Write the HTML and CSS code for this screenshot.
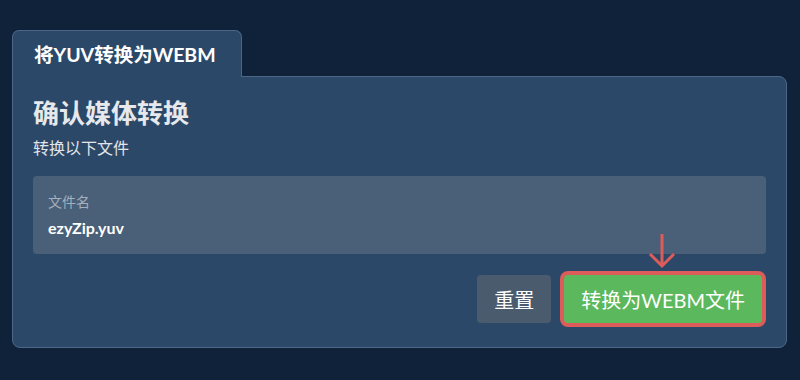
FILE: index.html
```html
<!DOCTYPE html>
<html lang="zh">
<head>
    <meta charset="UTF-8">
    <title>将YUV转换为WEBM</title>
    <link rel="stylesheet" href="styles.css">
</head>
<body>
    <div class="page">
        <div class="tab">将YUV转换为WEBM</div>
        <div class="card">
            <h1>确认媒体转换</h1>
            <p class="sub">转换以下文件</p>
            <div class="file-box">
                <div class="file-label">文件名</div>
                <div class="file-name">ezyZip.yuv</div>
            </div>
            <div class="actions">
                <button class="btn btn-reset">重置</button>
                <div class="convert-wrap">
                    <svg class="arrow" width="30" height="38" viewBox="0 0 30 38">
                        <path d="M15 2 V34 M3 22 L15 34 L27 22" fill="none" stroke="#dc5c5a" stroke-width="3"/>
                    </svg>
                    <button class="btn btn-convert">转换为WEBM文件</button>
                </div>
            </div>
        </div>
    </div>
</body>
</html>
```

FILE: styles.css
```css
/* General Styling */
html, body {
    margin: 0;
    height: 100%;
    background-color: #10223a;
    font-family: Lato, "Noto Sans CJK SC", sans-serif;
}
.page {
    padding: 30px 13px 0 12px;
}
.tab {
    display: inline-block;
    position: relative;
    z-index: 1;
    margin-bottom: -1px;
    width: 186px;
    padding: 12px 21px 10px;
    background-color: #2c4868;
    border: 1px solid #4c6688;
    border-bottom: none;
    border-radius: 7px 7px 0 0;
    color: white;
    font-size: 19.5px;
    font-weight: bold;
    line-height: 24px;
    white-space: nowrap;
}
.card {
    background-color: #2c4868;
    border: 1px solid #4c6688;
    border-radius: 0 8px 8px 8px;
    padding: 21px 20px 24px;
}
h1 {
    margin: 0;
    font-size: 26px;
    line-height: 31px;
    color: #e6e8eb;
}
.sub {
    margin: 8px 0 0;
    font-size: 16px;
    line-height: 22px;
    color: #e2e5e9;
}
.file-box {
    margin-top: 17px;
    background-color: #4a5f78;
    border-radius: 4px;
    padding: 16px 15px 15px;
}
.file-label {
    font-size: 14px;
    line-height: 20px;
    color: #a4afbd;
}
.file-name {
    margin-top: 5px;
    font-size: 16px;
    font-weight: bold;
    line-height: 22px;
    color: white;
}
.actions {
    display: flex;
    justify-content: flex-end;
    align-items: center;
    gap: 13px;
    margin-top: 21px;
    padding-right: 4px;
}
.btn {
    border: none;
    border-radius: 4px;
    height: 48px;
    color: white;
    font-family: Lato, "Noto Sans CJK SC", sans-serif;
    font-size: 20px;
    cursor: pointer;
}
.btn-reset {
    background-color: #4b5b6e;
    padding: 0 17px;
}
.convert-wrap {
    position: relative;
}
.btn-convert {
    background-color: #5cb85c;
    padding: 0 17px;
    box-shadow: 0 0 0 4px #dc5c5a;
}
.arrow {
    position: absolute;
    left: 50%;
    margin-left: -16px;
    top: -43px;
}
```
